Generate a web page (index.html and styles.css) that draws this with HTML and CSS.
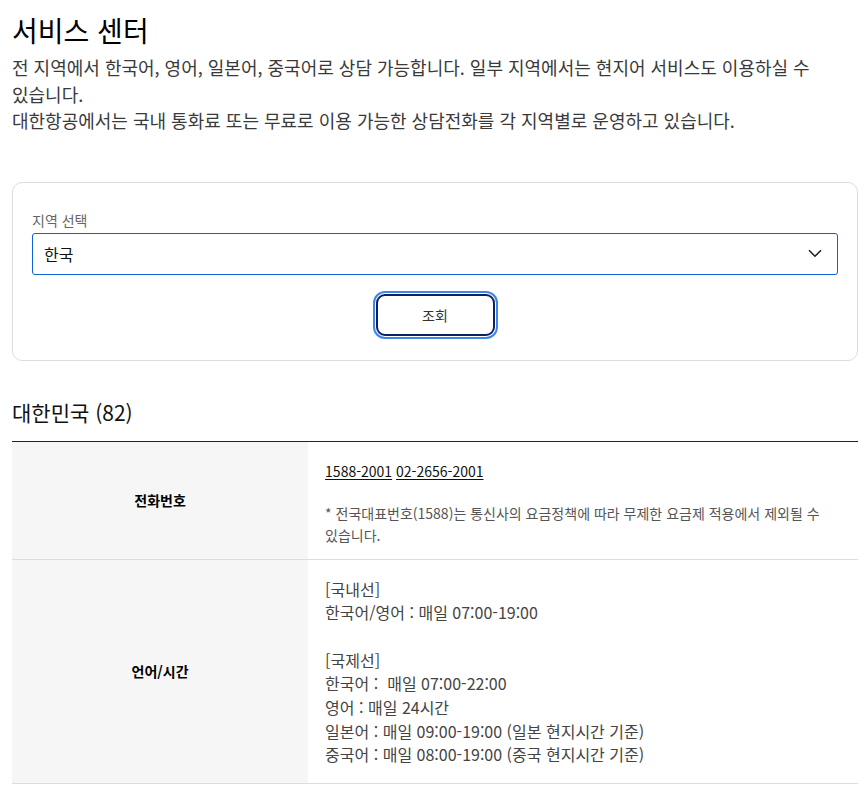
FILE: index.html
```html
<!DOCTYPE html>
<html lang="ko">
<head>
<meta charset="utf-8">
<title>서비스 센터</title>
<link rel="stylesheet" href="styles.css">
</head>
<body>
<main class="page">
  <h1 class="title">서비스 센터</h1>
  <p class="intro">전 지역에서 한국어, 영어, 일본어, 중국어로 상담 가능합니다. 일부 지역에서는 현지어 서비스도 이용하실 수 있습니다.<br>대한항공에서는 국내 통화료 또는 무료로 이용 가능한 상담전화를 각 지역별로 운영하고 있습니다.</p>

  <section class="search-card">
    <label class="field-label">지역 선택</label>
    <div class="select">
      <span class="select-value">한국</span>
      <svg class="chevron" width="14" height="9" viewBox="0 0 14 9" aria-hidden="true"><path d="M1 1.2 L7 7.2 L13 1.2" fill="none" stroke="#222" stroke-width="1.6"/></svg>
    </div>
    <div class="actions">
      <button class="btn-search" type="button">조회</button>
    </div>
  </section>

  <h2 class="country">대한민국 (82)</h2>
  <table class="info-table">
    <tr class="row-phone">
      <th>전화번호</th>
      <td>
        <p class="phones"><a class="tel">1588-2001</a> <a class="tel">02-2656-2001</a></p>
        <p class="note">* 전국대표번호(1588)는 통신사의 요금정책에 따라 무제한 요금제 적용에서 제외될 수 있습니다.</p>
      </td>
    </tr>
    <tr class="row-hours">
      <th>언어/시간</th>
      <td>
        <p class="hours">[국내선]<br>한국어/영어 : 매일 07:00-19:00<br><br>[국제선]<br>한국어 :&nbsp; 매일 07:00-22:00<br>영어 : 매일 24시간<br>일본어 : 매일 09:00-19:00 (일본 현지시간 기준)<br>중국어 : 매일 08:00-19:00 (중국 현지시간 기준)</p>
      </td>
    </tr>
  </table>
</main>
</body>
</html>
```

FILE: styles.css
```css
* { box-sizing: border-box; }
html, body { margin: 0; padding: 0; background: #fff; }
body {
  font-family: "Noto Sans CJK KR", "Noto Sans", sans-serif;
  color: #222;
  word-break: keep-all;
}
.page { padding: 0 8px 0 12px; }

.title {
  margin: 10px 0 0;
  font-size: 28px;
  font-weight: 400;
  line-height: 40px;
  color: #000;
}
.intro {
  margin: 4px 0 0;
  font-size: 18px;
  line-height: 26.5px;
  color: #3a3a3a;
}

.search-card {
  margin-top: 48px;
  border: 1px solid #ddd;
  border-radius: 10px;
  padding: 27px 19px 24px;
  display: flex;
  flex-direction: column;
}
.field-label {
  font-size: 14px;
  line-height: 20px;
  color: #666;
}
.select {
  margin-top: 3px;
  height: 42px;
  border: 1px solid #0b64d8;
  border-radius: 3px;
  display: flex;
  align-items: center;
  justify-content: space-between;
  padding: 0 15px 0 11px;
}
.select-value { font-size: 16px; color: #111; }
.chevron { display: block; }
.actions { display: flex; justify-content: center; margin-top: 19px; }
.btn-search {
  width: 119px;
  height: 42px;
  background: #fff;
  border: 2px solid #0a2166;
  border-radius: 9px;
  box-shadow: 0 0 0 1px #fff, 0 0 0 3px #3f86e8;
  font-family: inherit;
  font-size: 14px;
  color: #333;
  cursor: pointer;
}

.country {
  margin: 38px 0 0;
  font-size: 21px;
  font-weight: 400;
  line-height: 26px;
  color: #111;
}
.info-table {
  margin-top: 16px;
  width: 100%;
  border-collapse: collapse;
  border-top: 1px solid #0a2170;
}
.info-table th {
  width: 35%;
  background: #f6f6f6;
  font-size: 14px;
  font-weight: 700;
  color: #000;
  text-align: center;
  vertical-align: middle;
  border-bottom: 1px solid #ddd;
}
.info-table td {
  padding: 16px 17px;
  vertical-align: top;
  border-bottom: 1px solid #ddd;
}
.row-phone td { padding-bottom: 13px; }
.row-hours td { padding-top: 18px; padding-bottom: 16px; }
.info-table p { margin: 0; }
.phones { font-size: 14px; line-height: 26px; color: #111; }
.tel { color: #111; text-decoration: underline; text-underline-offset: 2px; }
.note { margin-top: 18px !important; font-size: 14px; line-height: 22px; color: #555; }
.hours { font-size: 16px; line-height: 23.7px; color: #444; }
```
